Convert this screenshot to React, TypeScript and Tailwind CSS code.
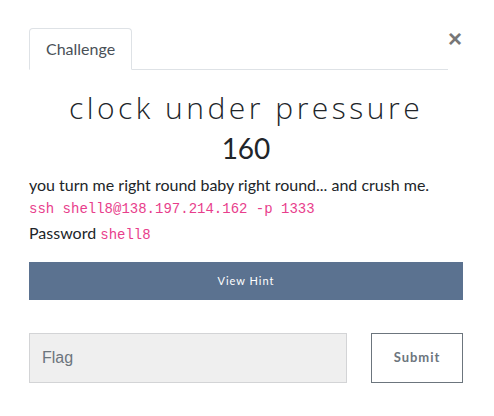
import React from "react";

export default function App() {
  return (
    <div className="w-[494px] h-[416px] bg-white relative" style={{ fontFamily: "Lato, 'Open Sans', sans-serif" }}>
      <div className="pl-[29px] pr-[31px] pt-[28px]">
        <div className="flex items-start">
          <div className="w-[420px] flex border-b border-[#dee2e6]">
            <div className="h-[42px] px-[16px] flex items-center border border-[#dee2e6] border-b-white -mb-px rounded-t-[4px] text-[16px] text-[#495057] bg-white">
              Challenge
            </div>
          </div>
          <div className="flex-1 flex justify-end">
            <span className="text-[24px] leading-none font-bold text-[#777] mt-[-1px] mr-[1px]" style={{ fontFamily: "'Liberation Sans', Arial, sans-serif" }}>×</span>
          </div>
        </div>
        <div className="mt-[20px] text-center text-[30px] leading-[36px] font-light tracking-[3.5px] text-[#212529]" style={{ fontFamily: "'Open Sans', sans-serif" }}>
          clock under pressure
        </div>
        <div className="mt-[4px] text-center text-[28px] leading-[36px] text-[#212529]">160</div>
        <div className="mt-[7px] text-[16px] leading-[24px] text-[#212529]">
          <p>you turn me right round baby right round... and crush me.</p>
          <p className="text-[14px] text-[#e83e8c]" style={{ fontFamily: "'Liberation Mono', monospace" }}>ssh shell8@138.197.214.162 -p 1333</p>
          <p>Password <code className="text-[14px] text-[#e83e8c]" style={{ fontFamily: "'Liberation Mono', monospace" }}>shell8</code></p>
        </div>
        <button className="mt-[15px] w-[434px] h-[38px] bg-[#5b7290] text-white text-[11px] tracking-[1px]">View Hint</button>
        <div className="mt-[33px] flex justify-between w-[434px]">
          <input
            placeholder="Flag"
            className="w-[318px] h-[50px] bg-[#efefef] border border-[#d3d4d6] px-[12px] text-[16px] placeholder:text-[#6c757d] outline-none"
            style={{ fontFamily: "'Liberation Sans', Arial, sans-serif" }}
          />
          <button className="w-[92px] h-[50px] border border-[#6c757d] text-[#6c757d] text-[13px] font-bold tracking-[1px]">Submit</button>
        </div>
      </div>
    </div>
  );
}
